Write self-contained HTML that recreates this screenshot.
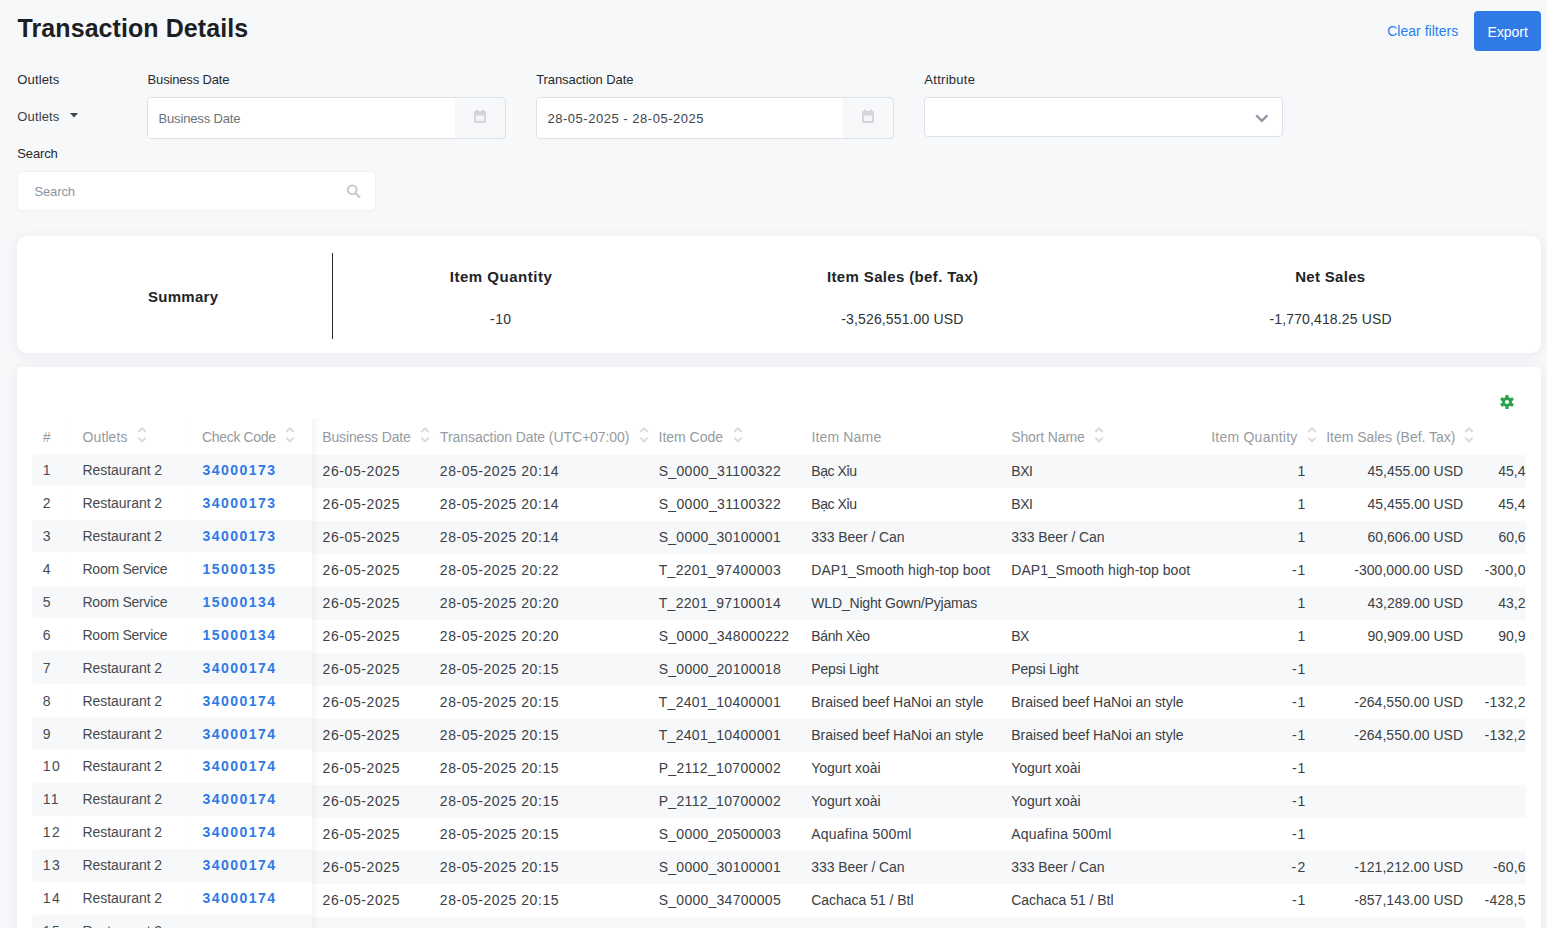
<!DOCTYPE html><html><head><meta charset="utf-8"><style>
html,body{margin:0;padding:0;width:1547px;height:928px;overflow:hidden;background:#f7f8fa;}
body{font-family:"Liberation Sans",sans-serif;position:relative;}
.t{position:absolute;white-space:nowrap;line-height:1;font-family:"Liberation Sans",sans-serif;}
.r{position:absolute;box-sizing:border-box;}
.clip{position:absolute;overflow:hidden;}
</style></head><body>
<div class="t " style="left:17.60px;top:15.85px;font-size:25px;color:#1c1f23;font-weight:bold;letter-spacing:0.069px;">Transaction Details</div>
<div class="t " style="left:1387.20px;top:24.16px;font-size:14px;color:#2780ee;letter-spacing:0.017px;">Clear filters</div>
<div class="r" style="left:1474px;top:11px;width:67px;height:40px;background:#2f7ae5;border-radius:4px;"></div>
<div class="t " style="left:1487.60px;top:25.36px;font-size:14px;color:#ffffff;letter-spacing:-0.033px;">Export</div>
<div class="t " style="left:17.35px;top:73.00px;font-size:13px;color:#262a2e;letter-spacing:0.136px;">Outlets</div>
<div class="t " style="left:147.60px;top:73.00px;font-size:13px;color:#262a2e;letter-spacing:-0.169px;">Business Date</div>
<div class="t " style="left:536.20px;top:73.00px;font-size:13px;color:#262a2e;letter-spacing:-0.081px;">Transaction Date</div>
<div class="t " style="left:924.30px;top:73.00px;font-size:13px;color:#262a2e;letter-spacing:0.286px;">Attribute</div>
<div class="t " style="left:17.35px;top:110.00px;font-size:13px;color:#3b4046;letter-spacing:0.136px;">Outlets</div>
<svg style="position:absolute;left:69px;top:112px" width="10" height="7" viewBox="0 0 10 7"><path d="M1 1 L9 1 L5 5.5 Z" fill="#3d4550"/></svg>
<div class="r" style="left:147px;top:97px;width:359px;height:42px;background:#f7f8fa;border:1px solid #dde1e6;border-radius:4px;"></div>
<div class="r" style="left:148px;top:98px;width:307px;height:40px;background:#fff;border-radius:3px 0 0 3px;"></div>
<div class="t " style="left:158.50px;top:112.00px;font-size:13px;color:#6c737a;letter-spacing:-0.152px;">Business Date</div>
<svg style="position:absolute;left:472.5px;top:109px" width="14" height="15" viewBox="0 0 14 15"><rect x="1" y="2" width="12" height="12" rx="1" fill="#d3d5d8"/><rect x="3" y="6" width="8" height="6" fill="#f4f5f6"/><rect x="3" y="0.5" width="2" height="3" fill="#d3d5d8"/><rect x="9" y="0.5" width="2" height="3" fill="#d3d5d8"/><path d="M4 6.5h1M6.5 6.5h1M9 6.5h1" stroke="#c8cacd" stroke-width="1"/></svg>
<div class="r" style="left:536px;top:97px;width:358px;height:42px;background:#f7f8fa;border:1px solid #dde1e6;border-radius:4px;"></div>
<div class="r" style="left:537px;top:98px;width:306px;height:40px;background:#fff;border-radius:3px 0 0 3px;"></div>
<div class="t " style="left:547.50px;top:112.00px;font-size:13px;color:#3e4349;letter-spacing:0.520px;">28-05-2025 - 28-05-2025</div>
<svg style="position:absolute;left:860.5px;top:109px" width="14" height="15" viewBox="0 0 14 15"><rect x="1" y="2" width="12" height="12" rx="1" fill="#d3d5d8"/><rect x="3" y="6" width="8" height="6" fill="#f4f5f6"/><rect x="3" y="0.5" width="2" height="3" fill="#d3d5d8"/><rect x="9" y="0.5" width="2" height="3" fill="#d3d5d8"/><path d="M4 6.5h1M6.5 6.5h1M9 6.5h1" stroke="#c8cacd" stroke-width="1"/></svg>
<div class="r" style="left:924px;top:97px;width:359px;height:40px;background:#fff;border:1px solid #dde1e6;border-radius:4px;"></div>
<svg style="position:absolute;left:1253px;top:111px" width="18" height="14" viewBox="0 0 18 14"><path d="M3.2 4.2 L8.8 9.8 L14.4 4.2" fill="none" stroke="#8a96a3" stroke-width="2.3"/></svg>
<div class="t " style="left:17.30px;top:147.00px;font-size:13px;color:#262a2e;letter-spacing:-0.138px;">Search</div>
<div class="r" style="left:17px;top:171px;width:359px;height:40px;background:#fff;border:1px solid #eff1f3;border-radius:5px;"></div>
<div class="t " style="left:34.40px;top:185.00px;font-size:13px;color:#8d959d;letter-spacing:-0.098px;">Search</div>
<svg style="position:absolute;left:345px;top:183px" width="18" height="17" viewBox="0 0 18 17"><circle cx="7.2" cy="6.8" r="4.4" fill="none" stroke="#c6cacd" stroke-width="2"/><path d="M10.4 10 L15 14.5" stroke="#c6cacd" stroke-width="2.4"/></svg>
<div class="r" style="left:17px;top:236px;width:1524px;height:117px;background:#fff;border-radius:10px;box-shadow:0 2px 14px rgba(30,40,55,0.07);"></div>
<div class="r" style="left:332px;top:253px;width:1px;height:86px;background:#25282c;"></div>
<div class="t " style="left:147.90px;top:289.31px;font-size:15px;color:#212427;font-weight:bold;letter-spacing:0.306px;">Summary</div>
<div class="t " style="left:449.70px;top:269.11px;font-size:15px;color:#212427;font-weight:bold;letter-spacing:0.529px;">Item Quantity</div>
<div class="t " style="left:827.00px;top:269.11px;font-size:15px;color:#212427;font-weight:bold;letter-spacing:0.353px;">Item Sales (bef. Tax)</div>
<div class="t " style="left:1295.20px;top:269.11px;font-size:15px;color:#212427;font-weight:bold;letter-spacing:0.308px;">Net Sales</div>
<div class="t " style="left:490.10px;top:311.96px;font-size:14px;color:#2e3236;letter-spacing:0.382px;">-10</div>
<div class="t " style="left:841.30px;top:311.96px;font-size:14px;color:#2e3236;letter-spacing:0.134px;">-3,526,551.00 USD</div>
<div class="t " style="left:1269.50px;top:311.96px;font-size:14px;color:#2e3236;letter-spacing:0.134px;">-1,770,418.25 USD</div>
<div class="r" style="left:17px;top:367px;width:1524px;height:633px;background:#fff;border-radius:4px;box-shadow:0 2px 14px rgba(30,40,55,0.07);"></div>
<svg style="position:absolute;left:1500px;top:395px" width="14" height="14" viewBox="0 0 14 14"><g transform="translate(7 7)" fill="#2aa34a"><rect x="-1.6" y="-7" width="3.2" height="3.2" transform="rotate(0)"/><rect x="-1.6" y="-7" width="3.2" height="3.2" transform="rotate(60)"/><rect x="-1.6" y="-7" width="3.2" height="3.2" transform="rotate(120)"/><rect x="-1.6" y="-7" width="3.2" height="3.2" transform="rotate(180)"/><rect x="-1.6" y="-7" width="3.2" height="3.2" transform="rotate(240)"/><rect x="-1.6" y="-7" width="3.2" height="3.2" transform="rotate(300)"/><circle r="5" /></g><circle cx="7" cy="7" r="2.1" fill="#fff"/></svg>
<div class="clip" style="left:32px;top:400px;width:1494px;height:528px;">
<div class="r" style="left:0px;top:53.89999999999998px;width:280px;height:32.60000000000002px;background:#f7f8fa;border-radius:4px 0 0 4px;"></div>
<div class="r" style="left:280px;top:55px;width:1214px;height:32.80000000000001px;background:#f7f8fa;"></div>
<div class="t " style="left:10.70px;top:63.06px;font-size:14px;color:#464b50;">1</div>
<div class="t " style="left:50.50px;top:63.06px;font-size:14px;color:#464b50;letter-spacing:-0.051px;">Restaurant 2</div>
<div class="t " style="left:170.50px;top:63.06px;font-size:14px;color:#2f7ae5;font-weight:bold;letter-spacing:1.458px;">34000173</div>
<div class="t " style="left:290.50px;top:64.16px;font-size:14px;color:#3b4045;letter-spacing:0.598px;">26-05-2025</div>
<div class="t " style="left:407.80px;top:64.16px;font-size:14px;color:#3b4045;letter-spacing:0.544px;">28-05-2025 20:14</div>
<div class="t " style="left:626.70px;top:64.16px;font-size:14px;color:#3b4045;letter-spacing:0.335px;">S_0000_31100322</div>
<div class="t " style="left:779.30px;top:64.16px;font-size:14px;color:#3b4045;letter-spacing:-0.425px;">Bạc Xỉu</div>
<div class="t " style="left:979.30px;top:64.16px;font-size:14px;color:#3b4045;letter-spacing:-0.433px;">BXI</div>
<div class="t " style="left:1265.61px;top:64.16px;font-size:14px;color:#3b4045;">1</div>
<div class="t " style="left:1335.50px;top:64.16px;font-size:14px;color:#3b4045;letter-spacing:-0.011px;">45,455.00 USD</div>
<div class="t " style="left:1466.30px;top:64.16px;font-size:14px;color:#3b4045;letter-spacing:-0.016px;">45,4</div>
<div class="t " style="left:10.70px;top:95.99px;font-size:14px;color:#464b50;">2</div>
<div class="t " style="left:50.50px;top:95.99px;font-size:14px;color:#464b50;letter-spacing:-0.051px;">Restaurant 2</div>
<div class="t " style="left:170.50px;top:95.99px;font-size:14px;color:#2f7ae5;font-weight:bold;letter-spacing:1.458px;">34000173</div>
<div class="t " style="left:290.50px;top:97.16px;font-size:14px;color:#3b4045;letter-spacing:0.598px;">26-05-2025</div>
<div class="t " style="left:407.80px;top:97.16px;font-size:14px;color:#3b4045;letter-spacing:0.544px;">28-05-2025 20:14</div>
<div class="t " style="left:626.70px;top:97.16px;font-size:14px;color:#3b4045;letter-spacing:0.335px;">S_0000_31100322</div>
<div class="t " style="left:779.30px;top:97.16px;font-size:14px;color:#3b4045;letter-spacing:-0.425px;">Bạc Xỉu</div>
<div class="t " style="left:979.30px;top:97.16px;font-size:14px;color:#3b4045;letter-spacing:-0.433px;">BXI</div>
<div class="t " style="left:1265.61px;top:97.16px;font-size:14px;color:#3b4045;">1</div>
<div class="t " style="left:1335.50px;top:97.16px;font-size:14px;color:#3b4045;letter-spacing:-0.011px;">45,455.00 USD</div>
<div class="t " style="left:1466.30px;top:97.16px;font-size:14px;color:#3b4045;letter-spacing:-0.016px;">45,4</div>
<div class="r" style="left:0px;top:119.75999999999999px;width:280px;height:32.60000000000002px;background:#f7f8fa;border-radius:4px 0 0 4px;"></div>
<div class="r" style="left:280px;top:121px;width:1214px;height:32.799999999999955px;background:#f7f8fa;"></div>
<div class="t " style="left:10.70px;top:128.92px;font-size:14px;color:#464b50;">3</div>
<div class="t " style="left:50.50px;top:128.92px;font-size:14px;color:#464b50;letter-spacing:-0.051px;">Restaurant 2</div>
<div class="t " style="left:170.50px;top:128.92px;font-size:14px;color:#2f7ae5;font-weight:bold;letter-spacing:1.458px;">34000173</div>
<div class="t " style="left:290.50px;top:130.16px;font-size:14px;color:#3b4045;letter-spacing:0.598px;">26-05-2025</div>
<div class="t " style="left:407.80px;top:130.16px;font-size:14px;color:#3b4045;letter-spacing:0.544px;">28-05-2025 20:14</div>
<div class="t " style="left:626.70px;top:130.16px;font-size:14px;color:#3b4045;letter-spacing:0.261px;">S_0000_30100001</div>
<div class="t " style="left:779.30px;top:130.16px;font-size:14px;color:#3b4045;letter-spacing:-0.067px;">333 Beer / Can</div>
<div class="t " style="left:979.30px;top:130.16px;font-size:14px;color:#3b4045;letter-spacing:-0.067px;">333 Beer / Can</div>
<div class="t " style="left:1265.61px;top:130.16px;font-size:14px;color:#3b4045;">1</div>
<div class="t " style="left:1335.60px;top:130.16px;font-size:14px;color:#3b4045;letter-spacing:-0.019px;">60,606.00 USD</div>
<div class="t " style="left:1466.50px;top:130.16px;font-size:14px;color:#3b4045;letter-spacing:-0.083px;">60,6</div>
<div class="t " style="left:10.70px;top:161.85px;font-size:14px;color:#464b50;">4</div>
<div class="t " style="left:50.50px;top:161.85px;font-size:14px;color:#464b50;letter-spacing:-0.256px;">Room Service</div>
<div class="t " style="left:170.50px;top:161.85px;font-size:14px;color:#2f7ae5;font-weight:bold;letter-spacing:1.458px;">15000135</div>
<div class="t " style="left:290.50px;top:163.16px;font-size:14px;color:#3b4045;letter-spacing:0.598px;">26-05-2025</div>
<div class="t " style="left:407.80px;top:163.16px;font-size:14px;color:#3b4045;letter-spacing:0.544px;">28-05-2025 20:22</div>
<div class="t " style="left:626.70px;top:163.16px;font-size:14px;color:#3b4045;letter-spacing:0.317px;">T_2201_97400003</div>
<div class="t " style="left:779.30px;top:163.16px;font-size:14px;color:#3b4045;letter-spacing:0.024px;">DAP1_Smooth high-top boot</div>
<div class="t " style="left:979.30px;top:163.16px;font-size:14px;color:#3b4045;letter-spacing:0.024px;">DAP1_Smooth high-top boot</div>
<div class="t " style="left:1259.90px;top:163.16px;font-size:14px;color:#3b4045;letter-spacing:1.051px;">-1</div>
<div class="t " style="left:1322.20px;top:163.16px;font-size:14px;color:#3b4045;letter-spacing:0.051px;">-300,000.00 USD</div>
<div class="t " style="left:1452.50px;top:163.16px;font-size:14px;color:#3b4045;letter-spacing:0.260px;">-300,0</div>
<div class="r" style="left:0px;top:185.62px;width:280px;height:32.60000000000002px;background:#f7f8fa;border-radius:4px 0 0 4px;"></div>
<div class="r" style="left:280px;top:187px;width:1214px;height:32.799999999999955px;background:#f7f8fa;"></div>
<div class="t " style="left:10.70px;top:194.78px;font-size:14px;color:#464b50;">5</div>
<div class="t " style="left:50.50px;top:194.78px;font-size:14px;color:#464b50;letter-spacing:-0.256px;">Room Service</div>
<div class="t " style="left:170.50px;top:194.78px;font-size:14px;color:#2f7ae5;font-weight:bold;letter-spacing:1.458px;">15000134</div>
<div class="t " style="left:290.50px;top:196.16px;font-size:14px;color:#3b4045;letter-spacing:0.598px;">26-05-2025</div>
<div class="t " style="left:407.80px;top:196.16px;font-size:14px;color:#3b4045;letter-spacing:0.544px;">28-05-2025 20:20</div>
<div class="t " style="left:626.70px;top:196.16px;font-size:14px;color:#3b4045;letter-spacing:0.317px;">T_2201_97100014</div>
<div class="t " style="left:779.30px;top:196.16px;font-size:14px;color:#3b4045;letter-spacing:-0.177px;">WLD_Night Gown/Pyjamas</div>
<div class="t " style="left:1265.61px;top:196.16px;font-size:14px;color:#3b4045;">1</div>
<div class="t " style="left:1335.50px;top:196.16px;font-size:14px;color:#3b4045;letter-spacing:-0.011px;">43,289.00 USD</div>
<div class="t " style="left:1466.30px;top:196.16px;font-size:14px;color:#3b4045;letter-spacing:-0.016px;">43,2</div>
<div class="t " style="left:10.70px;top:227.71px;font-size:14px;color:#464b50;">6</div>
<div class="t " style="left:50.50px;top:227.71px;font-size:14px;color:#464b50;letter-spacing:-0.256px;">Room Service</div>
<div class="t " style="left:170.50px;top:227.71px;font-size:14px;color:#2f7ae5;font-weight:bold;letter-spacing:1.458px;">15000134</div>
<div class="t " style="left:290.50px;top:229.16px;font-size:14px;color:#3b4045;letter-spacing:0.598px;">26-05-2025</div>
<div class="t " style="left:407.80px;top:229.16px;font-size:14px;color:#3b4045;letter-spacing:0.544px;">28-05-2025 20:20</div>
<div class="t " style="left:626.70px;top:229.16px;font-size:14px;color:#3b4045;letter-spacing:0.284px;">S_0000_348000222</div>
<div class="t " style="left:779.30px;top:229.16px;font-size:14px;color:#3b4045;letter-spacing:-0.385px;">Bánh Xèo</div>
<div class="t " style="left:979.30px;top:229.16px;font-size:14px;color:#3b4045;letter-spacing:-0.600px;">BX</div>
<div class="t " style="left:1265.61px;top:229.16px;font-size:14px;color:#3b4045;">1</div>
<div class="t " style="left:1335.50px;top:229.16px;font-size:14px;color:#3b4045;letter-spacing:-0.011px;">90,909.00 USD</div>
<div class="t " style="left:1466.30px;top:229.16px;font-size:14px;color:#3b4045;letter-spacing:-0.016px;">90,9</div>
<div class="r" style="left:0px;top:251.48000000000002px;width:280px;height:32.60000000000002px;background:#f7f8fa;border-radius:4px 0 0 4px;"></div>
<div class="r" style="left:280px;top:253px;width:1214px;height:32.799999999999955px;background:#f7f8fa;"></div>
<div class="t " style="left:10.70px;top:260.64px;font-size:14px;color:#464b50;">7</div>
<div class="t " style="left:50.50px;top:260.64px;font-size:14px;color:#464b50;letter-spacing:-0.051px;">Restaurant 2</div>
<div class="t " style="left:170.50px;top:260.64px;font-size:14px;color:#2f7ae5;font-weight:bold;letter-spacing:1.458px;">34000174</div>
<div class="t " style="left:290.50px;top:262.16px;font-size:14px;color:#3b4045;letter-spacing:0.598px;">26-05-2025</div>
<div class="t " style="left:407.80px;top:262.16px;font-size:14px;color:#3b4045;letter-spacing:0.544px;">28-05-2025 20:15</div>
<div class="t " style="left:626.70px;top:262.16px;font-size:14px;color:#3b4045;letter-spacing:0.261px;">S_0000_20100018</div>
<div class="t " style="left:779.30px;top:262.16px;font-size:14px;color:#3b4045;letter-spacing:-0.187px;">Pepsi Light</div>
<div class="t " style="left:979.30px;top:262.16px;font-size:14px;color:#3b4045;letter-spacing:-0.187px;">Pepsi Light</div>
<div class="t " style="left:1259.90px;top:262.16px;font-size:14px;color:#3b4045;letter-spacing:1.051px;">-1</div>
<div class="t " style="left:10.70px;top:293.57px;font-size:14px;color:#464b50;">8</div>
<div class="t " style="left:50.50px;top:293.57px;font-size:14px;color:#464b50;letter-spacing:-0.051px;">Restaurant 2</div>
<div class="t " style="left:170.50px;top:293.57px;font-size:14px;color:#2f7ae5;font-weight:bold;letter-spacing:1.458px;">34000174</div>
<div class="t " style="left:290.50px;top:295.16px;font-size:14px;color:#3b4045;letter-spacing:0.598px;">26-05-2025</div>
<div class="t " style="left:407.80px;top:295.16px;font-size:14px;color:#3b4045;letter-spacing:0.544px;">28-05-2025 20:15</div>
<div class="t " style="left:626.70px;top:295.16px;font-size:14px;color:#3b4045;letter-spacing:0.317px;">T_2401_10400001</div>
<div class="t " style="left:779.30px;top:295.16px;font-size:14px;color:#3b4045;letter-spacing:-0.052px;">Braised beef HaNoi an style</div>
<div class="t " style="left:979.30px;top:295.16px;font-size:14px;color:#3b4045;letter-spacing:-0.052px;">Braised beef HaNoi an style</div>
<div class="t " style="left:1259.90px;top:295.16px;font-size:14px;color:#3b4045;letter-spacing:1.051px;">-1</div>
<div class="t " style="left:1322.20px;top:295.16px;font-size:14px;color:#3b4045;letter-spacing:0.051px;">-264,550.00 USD</div>
<div class="t " style="left:1452.50px;top:295.16px;font-size:14px;color:#3b4045;letter-spacing:0.260px;">-132,2</div>
<div class="r" style="left:0px;top:317.3399999999999px;width:280px;height:32.60000000000002px;background:#f7f8fa;border-radius:4px 0 0 4px;"></div>
<div class="r" style="left:280px;top:319px;width:1214px;height:32.799999999999955px;background:#f7f8fa;"></div>
<div class="t " style="left:10.70px;top:326.50px;font-size:14px;color:#464b50;">9</div>
<div class="t " style="left:50.50px;top:326.50px;font-size:14px;color:#464b50;letter-spacing:-0.051px;">Restaurant 2</div>
<div class="t " style="left:170.50px;top:326.50px;font-size:14px;color:#2f7ae5;font-weight:bold;letter-spacing:1.458px;">34000174</div>
<div class="t " style="left:290.50px;top:328.16px;font-size:14px;color:#3b4045;letter-spacing:0.598px;">26-05-2025</div>
<div class="t " style="left:407.80px;top:328.16px;font-size:14px;color:#3b4045;letter-spacing:0.544px;">28-05-2025 20:15</div>
<div class="t " style="left:626.70px;top:328.16px;font-size:14px;color:#3b4045;letter-spacing:0.317px;">T_2401_10400001</div>
<div class="t " style="left:779.30px;top:328.16px;font-size:14px;color:#3b4045;letter-spacing:-0.052px;">Braised beef HaNoi an style</div>
<div class="t " style="left:979.30px;top:328.16px;font-size:14px;color:#3b4045;letter-spacing:-0.052px;">Braised beef HaNoi an style</div>
<div class="t " style="left:1259.90px;top:328.16px;font-size:14px;color:#3b4045;letter-spacing:1.051px;">-1</div>
<div class="t " style="left:1322.20px;top:328.16px;font-size:14px;color:#3b4045;letter-spacing:0.051px;">-264,550.00 USD</div>
<div class="t " style="left:1452.50px;top:328.16px;font-size:14px;color:#3b4045;letter-spacing:0.260px;">-132,2</div>
<div class="t " style="left:10.70px;top:359.43px;font-size:14px;color:#464b50;letter-spacing:1.402px;">10</div>
<div class="t " style="left:50.50px;top:359.43px;font-size:14px;color:#464b50;letter-spacing:-0.051px;">Restaurant 2</div>
<div class="t " style="left:170.50px;top:359.43px;font-size:14px;color:#2f7ae5;font-weight:bold;letter-spacing:1.458px;">34000174</div>
<div class="t " style="left:290.50px;top:361.16px;font-size:14px;color:#3b4045;letter-spacing:0.598px;">26-05-2025</div>
<div class="t " style="left:407.80px;top:361.16px;font-size:14px;color:#3b4045;letter-spacing:0.544px;">28-05-2025 20:15</div>
<div class="t " style="left:626.70px;top:361.16px;font-size:14px;color:#3b4045;letter-spacing:0.335px;">P_2112_10700002</div>
<div class="t " style="left:779.30px;top:361.16px;font-size:14px;color:#3b4045;letter-spacing:-0.024px;">Yogurt xoài</div>
<div class="t " style="left:979.30px;top:361.16px;font-size:14px;color:#3b4045;letter-spacing:-0.024px;">Yogurt xoài</div>
<div class="t " style="left:1259.90px;top:361.16px;font-size:14px;color:#3b4045;letter-spacing:1.051px;">-1</div>
<div class="r" style="left:0px;top:383.20000000000005px;width:280px;height:32.60000000000002px;background:#f7f8fa;border-radius:4px 0 0 4px;"></div>
<div class="r" style="left:280px;top:385px;width:1214px;height:32.799999999999955px;background:#f7f8fa;"></div>
<div class="t " style="left:10.70px;top:392.36px;font-size:14px;color:#464b50;letter-spacing:1.308px;">11</div>
<div class="t " style="left:50.50px;top:392.36px;font-size:14px;color:#464b50;letter-spacing:-0.051px;">Restaurant 2</div>
<div class="t " style="left:170.50px;top:392.36px;font-size:14px;color:#2f7ae5;font-weight:bold;letter-spacing:1.458px;">34000174</div>
<div class="t " style="left:290.50px;top:394.16px;font-size:14px;color:#3b4045;letter-spacing:0.598px;">26-05-2025</div>
<div class="t " style="left:407.80px;top:394.16px;font-size:14px;color:#3b4045;letter-spacing:0.544px;">28-05-2025 20:15</div>
<div class="t " style="left:626.70px;top:394.16px;font-size:14px;color:#3b4045;letter-spacing:0.335px;">P_2112_10700002</div>
<div class="t " style="left:779.30px;top:394.16px;font-size:14px;color:#3b4045;letter-spacing:-0.024px;">Yogurt xoài</div>
<div class="t " style="left:979.30px;top:394.16px;font-size:14px;color:#3b4045;letter-spacing:-0.024px;">Yogurt xoài</div>
<div class="t " style="left:1259.90px;top:394.16px;font-size:14px;color:#3b4045;letter-spacing:1.051px;">-1</div>
<div class="t " style="left:10.70px;top:425.29px;font-size:14px;color:#464b50;letter-spacing:1.402px;">12</div>
<div class="t " style="left:50.50px;top:425.29px;font-size:14px;color:#464b50;letter-spacing:-0.051px;">Restaurant 2</div>
<div class="t " style="left:170.50px;top:425.29px;font-size:14px;color:#2f7ae5;font-weight:bold;letter-spacing:1.458px;">34000174</div>
<div class="t " style="left:290.50px;top:427.16px;font-size:14px;color:#3b4045;letter-spacing:0.598px;">26-05-2025</div>
<div class="t " style="left:407.80px;top:427.16px;font-size:14px;color:#3b4045;letter-spacing:0.544px;">28-05-2025 20:15</div>
<div class="t " style="left:626.70px;top:427.16px;font-size:14px;color:#3b4045;letter-spacing:0.261px;">S_0000_20500003</div>
<div class="t " style="left:779.30px;top:427.16px;font-size:14px;color:#3b4045;letter-spacing:0.216px;">Aquafina 500ml</div>
<div class="t " style="left:979.30px;top:427.16px;font-size:14px;color:#3b4045;letter-spacing:0.216px;">Aquafina 500ml</div>
<div class="t " style="left:1259.90px;top:427.16px;font-size:14px;color:#3b4045;letter-spacing:1.051px;">-1</div>
<div class="r" style="left:0px;top:449.05999999999995px;width:280px;height:32.60000000000002px;background:#f7f8fa;border-radius:4px 0 0 4px;"></div>
<div class="r" style="left:280px;top:451px;width:1214px;height:32.799999999999955px;background:#f7f8fa;"></div>
<div class="t " style="left:10.70px;top:458.22px;font-size:14px;color:#464b50;letter-spacing:1.402px;">13</div>
<div class="t " style="left:50.50px;top:458.22px;font-size:14px;color:#464b50;letter-spacing:-0.051px;">Restaurant 2</div>
<div class="t " style="left:170.50px;top:458.22px;font-size:14px;color:#2f7ae5;font-weight:bold;letter-spacing:1.458px;">34000174</div>
<div class="t " style="left:290.50px;top:460.16px;font-size:14px;color:#3b4045;letter-spacing:0.598px;">26-05-2025</div>
<div class="t " style="left:407.80px;top:460.16px;font-size:14px;color:#3b4045;letter-spacing:0.544px;">28-05-2025 20:15</div>
<div class="t " style="left:626.70px;top:460.16px;font-size:14px;color:#3b4045;letter-spacing:0.261px;">S_0000_30100001</div>
<div class="t " style="left:779.30px;top:460.16px;font-size:14px;color:#3b4045;letter-spacing:-0.067px;">333 Beer / Can</div>
<div class="t " style="left:979.30px;top:460.16px;font-size:14px;color:#3b4045;letter-spacing:-0.067px;">333 Beer / Can</div>
<div class="t " style="left:1259.40px;top:460.16px;font-size:14px;color:#3b4045;letter-spacing:1.551px;">-2</div>
<div class="t " style="left:1322.20px;top:460.16px;font-size:14px;color:#3b4045;letter-spacing:0.051px;">-121,212.00 USD</div>
<div class="t " style="left:1460.90px;top:460.16px;font-size:14px;color:#3b4045;letter-spacing:0.172px;">-60,6</div>
<div class="t " style="left:10.70px;top:491.15px;font-size:14px;color:#464b50;letter-spacing:1.402px;">14</div>
<div class="t " style="left:50.50px;top:491.15px;font-size:14px;color:#464b50;letter-spacing:-0.051px;">Restaurant 2</div>
<div class="t " style="left:170.50px;top:491.15px;font-size:14px;color:#2f7ae5;font-weight:bold;letter-spacing:1.458px;">34000174</div>
<div class="t " style="left:290.50px;top:493.16px;font-size:14px;color:#3b4045;letter-spacing:0.598px;">26-05-2025</div>
<div class="t " style="left:407.80px;top:493.16px;font-size:14px;color:#3b4045;letter-spacing:0.544px;">28-05-2025 20:15</div>
<div class="t " style="left:626.70px;top:493.16px;font-size:14px;color:#3b4045;letter-spacing:0.261px;">S_0000_34700005</div>
<div class="t " style="left:779.30px;top:493.16px;font-size:14px;color:#3b4045;letter-spacing:-0.035px;">Cachaca 51 / Btl</div>
<div class="t " style="left:979.30px;top:493.16px;font-size:14px;color:#3b4045;letter-spacing:-0.035px;">Cachaca 51 / Btl</div>
<div class="t " style="left:1259.90px;top:493.16px;font-size:14px;color:#3b4045;letter-spacing:1.051px;">-1</div>
<div class="t " style="left:1322.20px;top:493.16px;font-size:14px;color:#3b4045;letter-spacing:0.051px;">-857,143.00 USD</div>
<div class="t " style="left:1452.50px;top:493.16px;font-size:14px;color:#3b4045;letter-spacing:0.260px;">-428,5</div>
<div class="r" style="left:0px;top:514.92px;width:280px;height:32.60000000000002px;background:#f7f8fa;border-radius:4px 0 0 4px;"></div>
<div class="r" style="left:280px;top:517px;width:1214px;height:32.799999999999955px;background:#f7f8fa;"></div>
<div class="t " style="left:10.70px;top:524.08px;font-size:14px;color:#464b50;letter-spacing:1.402px;">15</div>
<div class="t " style="left:50.50px;top:524.08px;font-size:14px;color:#464b50;letter-spacing:-0.051px;">Restaurant 2</div>
<div class="r" style="left:39px;top:18px;width:1px;height:510px;background:rgba(0,0,0,0.006);"></div>
<div class="r" style="left:159px;top:18px;width:1px;height:510px;background:rgba(0,0,0,0.006);"></div>
<div class="r" style="left:280px;top:18px;width:8px;height:510px;background:linear-gradient(to right,rgba(0,0,0,0.035),rgba(0,0,0,0));"></div>
<div class="t " style="left:10.70px;top:29.66px;font-size:14px;color:#959ba1;">#</div>
<div class="t " style="left:50.50px;top:29.66px;font-size:14px;color:#959ba1;letter-spacing:0.108px;">Outlets</div>
<svg style="position:absolute;left:104.69999999999999px;top:27px" width="10" height="16" viewBox="0 0 10 16"><path d="M1.2 5 L5 1.3 L8.8 5 M1.2 10.6 L5 14.3 L8.8 10.6" fill="none" stroke="#d9dbdd" stroke-width="1.9"/></svg>
<div class="t " style="left:170.10px;top:29.66px;font-size:14px;color:#959ba1;letter-spacing:-0.349px;">Check Code</div>
<svg style="position:absolute;left:253.39999999999998px;top:27px" width="10" height="16" viewBox="0 0 10 16"><path d="M1.2 5 L5 1.3 L8.8 5 M1.2 10.6 L5 14.3 L8.8 10.6" fill="none" stroke="#d9dbdd" stroke-width="1.9"/></svg>
<div class="t " style="left:290.20px;top:30.46px;font-size:14px;color:#959ba1;letter-spacing:-0.131px;">Business Date</div>
<svg style="position:absolute;left:388.0px;top:27px" width="10" height="16" viewBox="0 0 10 16"><path d="M1.2 5 L5 1.3 L8.8 5 M1.2 10.6 L5 14.3 L8.8 10.6" fill="none" stroke="#d9dbdd" stroke-width="1.9"/></svg>
<div class="t " style="left:408.00px;top:30.46px;font-size:14px;color:#959ba1;letter-spacing:-0.070px;">Transaction Date (UTC+07:00)</div>
<svg style="position:absolute;left:606.8px;top:27px" width="10" height="16" viewBox="0 0 10 16"><path d="M1.2 5 L5 1.3 L8.8 5 M1.2 10.6 L5 14.3 L8.8 10.6" fill="none" stroke="#d9dbdd" stroke-width="1.9"/></svg>
<div class="t " style="left:626.50px;top:30.46px;font-size:14px;color:#959ba1;letter-spacing:-0.011px;">Item Code</div>
<svg style="position:absolute;left:700.7px;top:27px" width="10" height="16" viewBox="0 0 10 16"><path d="M1.2 5 L5 1.3 L8.8 5 M1.2 10.6 L5 14.3 L8.8 10.6" fill="none" stroke="#d9dbdd" stroke-width="1.9"/></svg>
<div class="t " style="left:779.40px;top:30.46px;font-size:14px;color:#959ba1;letter-spacing:0.167px;">Item Name</div>
<div class="t " style="left:979.20px;top:30.46px;font-size:14px;color:#959ba1;letter-spacing:-0.122px;">Short Name</div>
<svg style="position:absolute;left:1062.2px;top:27px" width="10" height="16" viewBox="0 0 10 16"><path d="M1.2 5 L5 1.3 L8.8 5 M1.2 10.6 L5 14.3 L8.8 10.6" fill="none" stroke="#d9dbdd" stroke-width="1.9"/></svg>
<div class="t " style="left:1179.20px;top:30.46px;font-size:14px;color:#959ba1;letter-spacing:0.237px;">Item Quantity</div>
<svg style="position:absolute;left:1274.7px;top:27px" width="10" height="16" viewBox="0 0 10 16"><path d="M1.2 5 L5 1.3 L8.8 5 M1.2 10.6 L5 14.3 L8.8 10.6" fill="none" stroke="#d9dbdd" stroke-width="1.9"/></svg>
<div class="t " style="left:1294.20px;top:30.46px;font-size:14px;color:#959ba1;letter-spacing:-0.024px;">Item Sales (Bef. Tax)</div>
<svg style="position:absolute;left:1432.1px;top:27px" width="10" height="16" viewBox="0 0 10 16"><path d="M1.2 5 L5 1.3 L8.8 5 M1.2 10.6 L5 14.3 L8.8 10.6" fill="none" stroke="#d9dbdd" stroke-width="1.9"/></svg>
</div>
</body></html>
